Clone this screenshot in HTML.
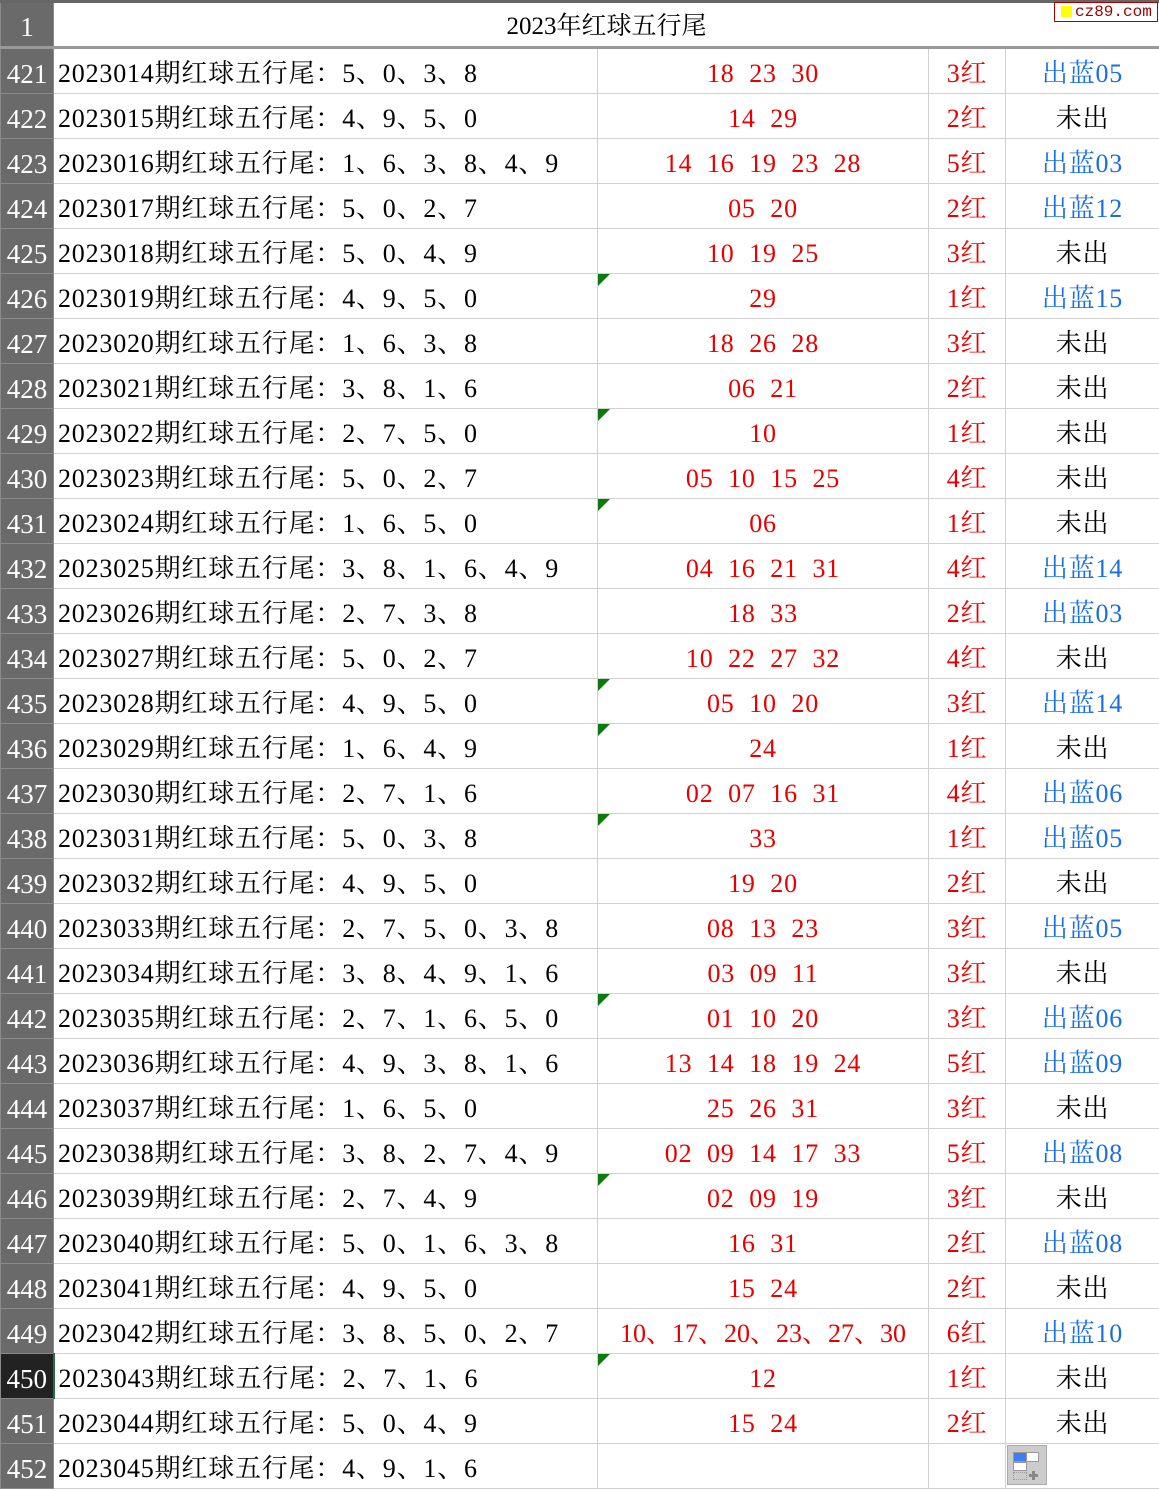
<!DOCTYPE html>
<html><head><meta charset="utf-8"><style>
body{margin:0;width:1159px;height:1491px;background:#fff;overflow:hidden;position:relative;font-family:"Liberation Serif","Noto Serif CJK SC",serif;}
table{position:absolute;left:0;top:0;border-collapse:collapse;table-layout:fixed;width:1159px;}
td{height:42px;border:1px solid #d0d0d0;padding:0 0 2px 0;font-size:26px;letter-spacing:0.8px;white-space:pre;overflow:hidden;vertical-align:bottom;line-height:34px;position:relative;}
td.h{background:#6a6a6a;color:#fff;text-align:center;border:1px solid #8a8a8a;font-size:27px;letter-spacing:0;padding-left:0;}
td.a{padding-left:4px;color:#000;}
td.b{text-align:center;color:#e60000;}
td.c{text-align:center;color:#e60000;}
td.d{text-align:center;color:#000;}
td.d.bl{color:#1a6fe0;}
tr.top td{height:41px;border-top:3px solid #666;border-bottom:3px solid #999;}
.t:before{content:"";position:absolute;left:0;top:0;border-top:12px solid #0a7a0a;border-right:12px solid transparent;}
.sel{background:#222!important;border-right:2px solid #217346!important;}
.logo{position:absolute;left:1054px;top:2px;width:102px;height:18px;border:1px solid #a00;background:#fff;font-family:"Liberation Mono",monospace;font-size:16px;color:#900;line-height:18px;white-space:nowrap;overflow:hidden;}
.logo i{display:inline-block;width:11px;height:11px;background:#ff0;margin:0 3px 0 6px;vertical-align:-1px;}
.ico{position:absolute;left:1007px;top:1445px;width:38px;height:38px;background:#ccc;border:1px solid #aaa;}
</style></head><body>
<table>
<col style="width:53px"><col style="width:544px"><col style="width:331px"><col style="width:77px"><col style="width:154px">
<tr class="top"><td class="h">1</td><td colspan="4" style="text-align:center;font-size:25px;letter-spacing:0;">2023年红球五行尾</td></tr>
<tr><td class="h">421</td><td class="a">2023014期红球五行尾：5、0、3、8</td><td class="b">18  23  30</td><td class="c">3红</td><td class="d bl">出蓝05</td></tr>
<tr><td class="h">422</td><td class="a">2023015期红球五行尾：4、9、5、0</td><td class="b">14  29</td><td class="c">2红</td><td class="d">未出</td></tr>
<tr><td class="h">423</td><td class="a">2023016期红球五行尾：1、6、3、8、4、9</td><td class="b">14  16  19  23  28</td><td class="c">5红</td><td class="d bl">出蓝03</td></tr>
<tr><td class="h">424</td><td class="a">2023017期红球五行尾：5、0、2、7</td><td class="b">05  20</td><td class="c">2红</td><td class="d bl">出蓝12</td></tr>
<tr><td class="h">425</td><td class="a">2023018期红球五行尾：5、0、4、9</td><td class="b">10  19  25</td><td class="c">3红</td><td class="d">未出</td></tr>
<tr><td class="h">426</td><td class="a">2023019期红球五行尾：4、9、5、0</td><td class="b t">29</td><td class="c">1红</td><td class="d bl">出蓝15</td></tr>
<tr><td class="h">427</td><td class="a">2023020期红球五行尾：1、6、3、8</td><td class="b">18  26  28</td><td class="c">3红</td><td class="d">未出</td></tr>
<tr><td class="h">428</td><td class="a">2023021期红球五行尾：3、8、1、6</td><td class="b">06  21</td><td class="c">2红</td><td class="d">未出</td></tr>
<tr><td class="h">429</td><td class="a">2023022期红球五行尾：2、7、5、0</td><td class="b t">10</td><td class="c">1红</td><td class="d">未出</td></tr>
<tr><td class="h">430</td><td class="a">2023023期红球五行尾：5、0、2、7</td><td class="b">05  10  15  25</td><td class="c">4红</td><td class="d">未出</td></tr>
<tr><td class="h">431</td><td class="a">2023024期红球五行尾：1、6、5、0</td><td class="b t">06</td><td class="c">1红</td><td class="d">未出</td></tr>
<tr><td class="h">432</td><td class="a">2023025期红球五行尾：3、8、1、6、4、9</td><td class="b">04  16  21  31</td><td class="c">4红</td><td class="d bl">出蓝14</td></tr>
<tr><td class="h">433</td><td class="a">2023026期红球五行尾：2、7、3、8</td><td class="b">18  33</td><td class="c">2红</td><td class="d bl">出蓝03</td></tr>
<tr><td class="h">434</td><td class="a">2023027期红球五行尾：5、0、2、7</td><td class="b">10  22  27  32</td><td class="c">4红</td><td class="d">未出</td></tr>
<tr><td class="h">435</td><td class="a">2023028期红球五行尾：4、9、5、0</td><td class="b t">05  10  20</td><td class="c">3红</td><td class="d bl">出蓝14</td></tr>
<tr><td class="h">436</td><td class="a">2023029期红球五行尾：1、6、4、9</td><td class="b t">24</td><td class="c">1红</td><td class="d">未出</td></tr>
<tr><td class="h">437</td><td class="a">2023030期红球五行尾：2、7、1、6</td><td class="b">02  07  16  31</td><td class="c">4红</td><td class="d bl">出蓝06</td></tr>
<tr><td class="h">438</td><td class="a">2023031期红球五行尾：5、0、3、8</td><td class="b t">33</td><td class="c">1红</td><td class="d bl">出蓝05</td></tr>
<tr><td class="h">439</td><td class="a">2023032期红球五行尾：4、9、5、0</td><td class="b">19  20</td><td class="c">2红</td><td class="d">未出</td></tr>
<tr><td class="h">440</td><td class="a">2023033期红球五行尾：2、7、5、0、3、8</td><td class="b">08  13  23</td><td class="c">3红</td><td class="d bl">出蓝05</td></tr>
<tr><td class="h">441</td><td class="a">2023034期红球五行尾：3、8、4、9、1、6</td><td class="b">03  09  11</td><td class="c">3红</td><td class="d">未出</td></tr>
<tr><td class="h">442</td><td class="a">2023035期红球五行尾：2、7、1、6、5、0</td><td class="b t">01  10  20</td><td class="c">3红</td><td class="d bl">出蓝06</td></tr>
<tr><td class="h">443</td><td class="a">2023036期红球五行尾：4、9、3、8、1、6</td><td class="b">13  14  18  19  24</td><td class="c">5红</td><td class="d bl">出蓝09</td></tr>
<tr><td class="h">444</td><td class="a">2023037期红球五行尾：1、6、5、0</td><td class="b">25  26  31</td><td class="c">3红</td><td class="d">未出</td></tr>
<tr><td class="h">445</td><td class="a">2023038期红球五行尾：3、8、2、7、4、9</td><td class="b">02  09  14  17  33</td><td class="c">5红</td><td class="d bl">出蓝08</td></tr>
<tr><td class="h">446</td><td class="a">2023039期红球五行尾：2、7、4、9</td><td class="b t">02  09  19</td><td class="c">3红</td><td class="d">未出</td></tr>
<tr><td class="h">447</td><td class="a">2023040期红球五行尾：5、0、1、6、3、8</td><td class="b">16  31</td><td class="c">2红</td><td class="d bl">出蓝08</td></tr>
<tr><td class="h">448</td><td class="a">2023041期红球五行尾：4、9、5、0</td><td class="b">15  24</td><td class="c">2红</td><td class="d">未出</td></tr>
<tr><td class="h">449</td><td class="a">2023042期红球五行尾：3、8、5、0、2、7</td><td class="b" style="letter-spacing:0">10、17、20、23、27、30</td><td class="c">6红</td><td class="d bl">出蓝10</td></tr>
<tr><td class="h sel">450</td><td class="a">2023043期红球五行尾：2、7、1、6</td><td class="b t">12</td><td class="c">1红</td><td class="d">未出</td></tr>
<tr><td class="h">451</td><td class="a">2023044期红球五行尾：5、0、4、9</td><td class="b">15  24</td><td class="c">2红</td><td class="d">未出</td></tr>
<tr><td class="h">452</td><td class="a">2023045期红球五行尾：4、9、1、6</td><td class="b"></td><td class="c"></td><td class="d"></td></tr>
</table>
<div class="logo"><i></i>cz89.com</div>
<div class="ico">
<div style="position:absolute;left:5px;top:6px;width:12px;height:8px;background:#3b7ff0;border:1px solid #999"></div>
<div style="position:absolute;left:18px;top:6px;width:11px;height:8px;background:#fff;border:1px solid #999"></div>
<div style="position:absolute;left:5px;top:16px;width:12px;height:7px;background:#fff;border:1px solid #999"></div>
<div style="position:absolute;left:5px;top:26px;width:12px;height:6px;border:1px dotted #999"></div>
<div style="position:absolute;left:21px;top:28px;width:9px;height:3px;background:#888"></div>
<div style="position:absolute;left:24px;top:25px;width:3px;height:9px;background:#888"></div>
</div>
</body></html>
